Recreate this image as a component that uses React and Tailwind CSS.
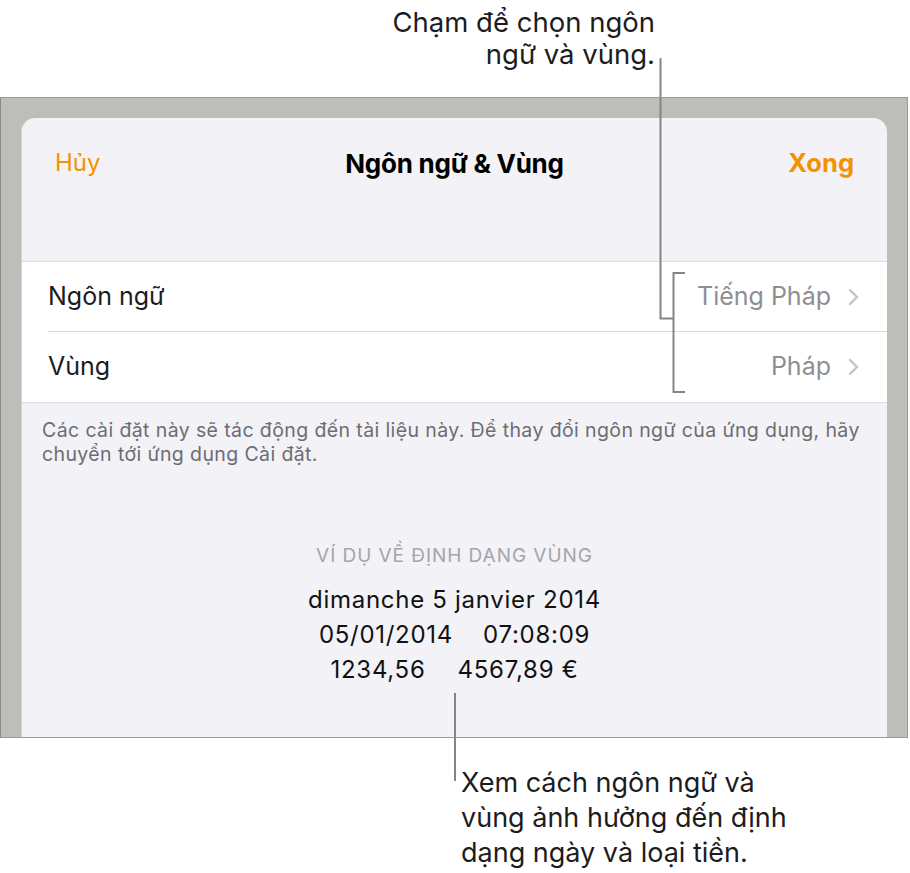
const rows = [
  { label: 'Ngôn ngữ', value: 'Tiếng Pháp' },
  { label: 'Vùng', value: 'Pháp' },
]

function Chevron() {
  return (
    <svg width="11" height="18" viewBox="0 0 11 18" className="shrink-0">
      <polyline points="2,2 9,9 2,16" fill="none" stroke="#c4c4c8" strokeWidth="2.4" strokeLinecap="round" strokeLinejoin="round" />
    </svg>
  )
}

function Callouts() {
  return (
    <svg className="absolute inset-0 pointer-events-none" width="910" height="873">
      <path d="M660.5 58 V318.5 H673" fill="none" stroke="#858585" strokeWidth="2" />
      <path d="M685 273 H673.5 V392 H685" fill="none" stroke="#858585" strokeWidth="2" />
      <path d="M455 693 V781" fill="none" stroke="#858585" strokeWidth="2" />
    </svg>
  )
}

export default function App() {
  return (
    <div className="relative w-[910px] h-[873px] bg-white overflow-hidden text-[#1c1c1e] font-['Inter','Liberation_Sans',sans-serif]">
      <div className="h-[97px] pr-[255px] pt-[6px] text-right text-[27.5px] leading-[32px]">
        Chạm để chọn ngôn
        <br />
        ngữ và vùng.
      </div>

      <div className="w-[908px] h-[641px] bg-[#bdbeb9] border border-[#9a9a98] border-l-[#8a8a8a] pt-[20px] px-[20px]">
        <div className="h-full rounded-t-[14px] bg-[#f2f2f7] border-l border-[#d2d2d2] overflow-hidden">
          <div className="h-[144px] border-b border-[#dcdce0]">
            <div className="h-[90px] grid grid-cols-[1fr_auto_1fr] items-center px-[33px]">
              <span className="text-[24px] text-[#f39200]">Hủy</span>
              <span className="text-[26px] font-bold tracking-[-0.01em] text-black">Ngôn ngữ &amp; Vùng</span>
              <span className="text-[25.5px] font-bold text-[#f39200] text-right">Xong</span>
            </div>
          </div>

          <div className="bg-white border-b border-[#dcdce0]">
            {rows.map((row, i) => (
              <div key={row.label} className="pl-[26px]">
                <div className={`h-[70px] flex items-center justify-between pr-[28px] ${i === 0 ? 'border-b border-[#dcdce0]' : ''}`}>
                  <span className="text-[25px]">{row.label}</span>
                  <span className="flex items-center gap-[17px] text-[25px] text-[#8e8e93]">
                    {row.value}
                    <Chevron />
                  </span>
                </div>
              </div>
            ))}
          </div>

          <p className="pt-[15px] pl-[20px] pr-[14px] text-[19.5px] leading-[24px] tracking-[0.02em] text-[#6d6d72]">
            Các cài đặt này sẽ tác động đến tài liệu này. Để thay đổi ngôn ngữ của ứng dụng, hãy chuyển tới ứng dụng Cài đặt.
          </p>

          <div className="mt-[78px] flex flex-col items-center">
            <div className="text-[19px] leading-[24px] tracking-[0.05em] text-[#a5a5aa]">VÍ DỤ VỀ ĐỊNH DẠNG VÙNG</div>
            <div className="mt-[14px] flex flex-col items-center text-[24px] leading-[35px] tracking-[0.03em] text-[#111]">
              <div>dimanche 5 janvier 2014</div>
              <div className="flex gap-[30px]">
                <span>05/01/2014</span>
                <span>07:08:09</span>
              </div>
              <div className="flex gap-[32px]">
                <span>1234,56</span>
                <span>4567,89 €</span>
              </div>
            </div>
          </div>
        </div>
      </div>

      <div className="pt-[27px] pl-[461px] text-[27px] leading-[35px]">
        Xem cách ngôn ngữ và
        <br />
        vùng ảnh hưởng đến định
        <br />
        dạng ngày và loại tiền.
      </div>

      <Callouts />
    </div>
  )
}
